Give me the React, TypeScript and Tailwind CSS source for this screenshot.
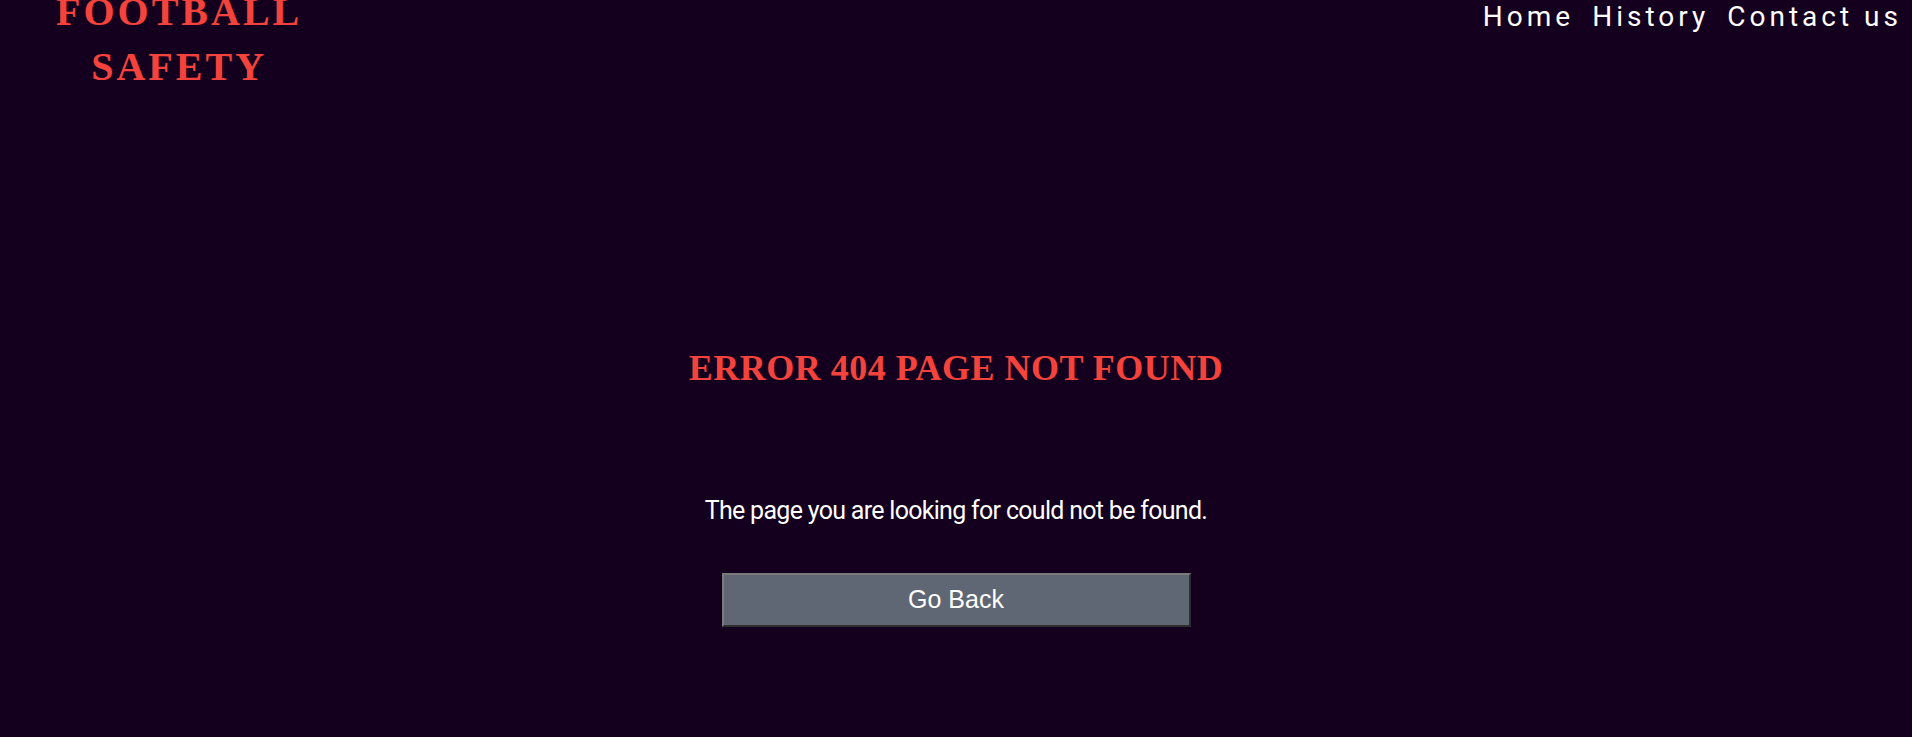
export default function App() {
  return (
    <div className="min-h-[737px] bg-[#14001e] overflow-hidden">
      <header className="flex items-start justify-between">
        <a
          href="#"
          className="-mt-[16px] ml-[56px] block text-center font-['Liberation_Serif',serif] text-[40px] font-bold leading-[55px] tracking-[3px] text-[#f4433c]"
        >
          FOOTBALL
          <br />
          SAFETY
        </a>
        <nav className="flex gap-[18px] pr-[10px] font-['Roboto',sans-serif] text-[28px] leading-[34px] tracking-[4px] text-white">
          <a href="#">Home</a>
          <a href="#">History</a>
          <a href="#">Contact us</a>
        </nav>
      </header>

      <main className="flex flex-col items-center pt-[254px]">
        <h1 className="font-['Liberation_Serif',serif] text-[36px] font-bold leading-[40px] tracking-[0.5px] text-[#f4433c]">
          ERROR 404 PAGE NOT FOUND
        </h1>
        <p className="mt-[107px] font-['Roboto',sans-serif] text-[25px] leading-[32px] tracking-[-0.7px] text-white">
          The page you are looking for could not be found.
        </p>
        <button
          type="button"
          className="mt-[46px] h-[54px] w-[469px] border-2 border-t-[#7a7a7a] border-l-[#7a7a7a] border-r-[#2e2e2e] border-b-[#2e2e2e] bg-[#5f6774] font-['Liberation_Sans',Arial,sans-serif] text-[25px] text-white"
        >
          Go Back
        </button>
      </main>
    </div>
  );
}
